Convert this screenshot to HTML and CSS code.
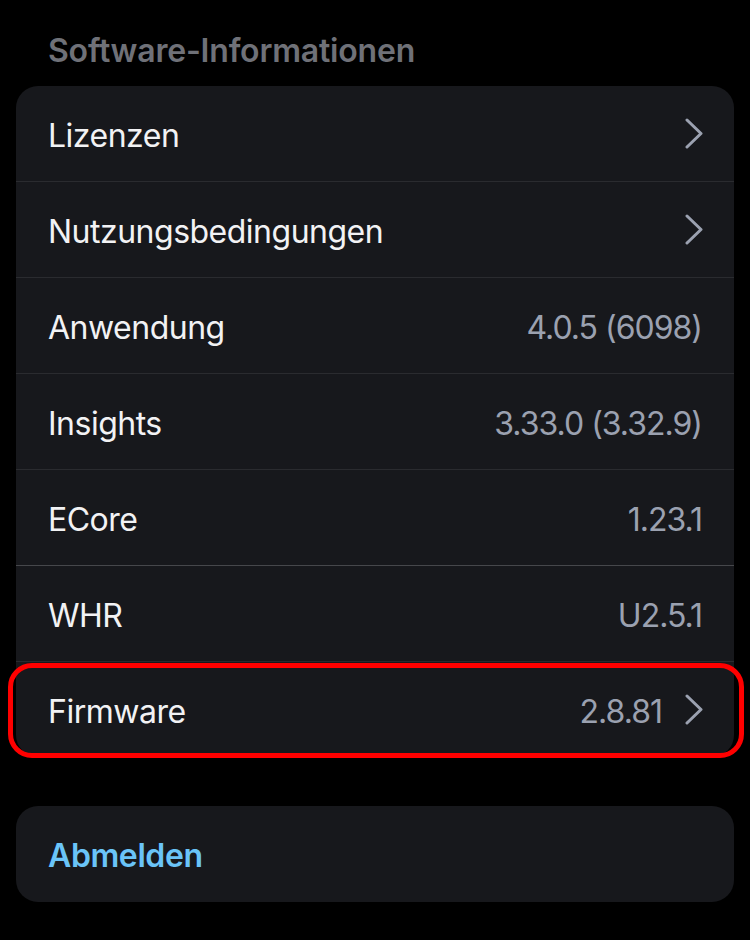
FILE: index.html
```html
<!DOCTYPE html>
<html lang="de">
<head>
<meta charset="utf-8">
<title>Software-Informationen</title>
<link rel="stylesheet" href="styles.css">
</head>
<body>
<main class="page">
  <h2 class="section-title">Software-Informationen</h2>
  <section class="card">
    <div class="row">
      <span class="label">Lizenzen</span>
      <svg class="chev" viewBox="0 0 18 31" width="18" height="31"><path d="M2 2 L16 15.5 L2 29" fill="none" stroke="currentColor" stroke-width="3" stroke-linecap="round" stroke-linejoin="round"/></svg>
    </div>
    <div class="row">
      <span class="label">Nutzungsbedingungen</span>
      <svg class="chev" viewBox="0 0 18 31" width="18" height="31"><path d="M2 2 L16 15.5 L2 29" fill="none" stroke="currentColor" stroke-width="3" stroke-linecap="round" stroke-linejoin="round"/></svg>
    </div>
    <div class="row">
      <span class="label">Anwendung</span>
      <span class="value">4.0.5 (6098)</span>
    </div>
    <div class="row">
      <span class="label">Insights</span>
      <span class="value">3.33.0 (3.32.9)</span>
    </div>
    <div class="row row-strong">
      <span class="label">ECore</span>
      <span class="value">1.23.1</span>
    </div>
    <div class="row">
      <span class="label">WHR</span>
      <span class="value">U2.5.1</span>
    </div>
    <div class="row">
      <span class="label">Firmware</span>
      <span class="value-wrap">
        <span class="value">2.8.81</span>
        <svg class="chev" viewBox="0 0 18 31" width="18" height="31"><path d="M2 2 L16 15.5 L2 29" fill="none" stroke="currentColor" stroke-width="3" stroke-linecap="round" stroke-linejoin="round"/></svg>
      </span>
    </div>
  </section>
  <section class="card logout-card">
    <div class="row">
      <span class="logout">Abmelden</span>
    </div>
  </section>
  <div class="highlight"></div>
</main>
</body>
</html>
```

FILE: styles.css
```css
html, body {
  margin: 0;
  padding: 0;
  background: #000;
}
body {
  font-family: "Inter", "Noto Sans", sans-serif;
  -webkit-font-smoothing: antialiased;
}
.page {
  position: relative;
  width: 750px;
  height: 940px;
  padding: 33px 16px 0;
  box-sizing: border-box;
}
.section-title {
  margin: 0 0 17px 32px;
  font-size: 32px;
  line-height: 36px;
  font-weight: 600;
  letter-spacing: -0.2px;
  color: #6f7178;
}
.card {
  background: #17181c;
  border-radius: 22px;
  overflow: hidden;
}
.row {
  display: flex;
  align-items: center;
  justify-content: space-between;
  height: 95px;
  padding: 0 32px;
  border-bottom: 1px solid #2a2b2f;
}
.row:last-child {
  border-bottom: none;
}
.row-strong {
  border-bottom-color: #46474b;
}
.label,
.value,
.logout {
  padding-top: 3px;
}
.label {
  font-size: 32px;
  letter-spacing: -0.5px;
  color: #f2f2f4;
}
.value {
  font-size: 32px;
  letter-spacing: -1px;
  color: #9ba1b0;
}
.value-wrap {
  display: flex;
  align-items: center;
  gap: 23px;
}
.chev {
  display: block;
  color: #9ba1b0;
  margin-right: -1px;
}
.logout-card {
  margin-top: 49px;
}
.logout-card .row {
  height: 96px;
}
.logout {
  font-size: 32px;
  font-weight: 600;
  letter-spacing: -0.4px;
  color: #6ac4f8;
}
.highlight {
  position: absolute;
  left: 8px;
  top: 663px;
  width: 736px;
  height: 95px;
  box-sizing: border-box;
  border: 5px solid #ff0000;
  border-radius: 24px;
}
```
